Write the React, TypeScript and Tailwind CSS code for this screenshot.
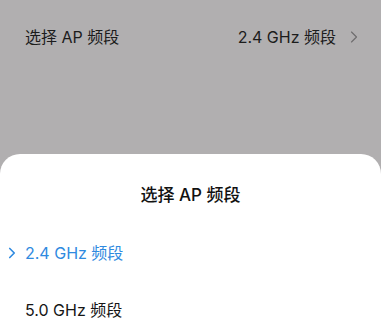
import { ChevronRight } from 'lucide-react';

const FONT = { fontFamily: 'Inter, "Noto Sans CJK SC", sans-serif' };

const bands = [
  { id: '2.4', label: '2.4 GHz 频段' },
  { id: '5.0', label: '5.0 GHz 频段' },
];

export default function App() {
  const selected = '2.4';

  return (
    <div className="flex h-[331px] w-[381px] flex-col overflow-hidden bg-[#b1afb0]" style={FONT}>
      {/* setting row behind the dimmed overlay */}
      <div className="flex h-[74px] shrink-0 items-center justify-between pl-[25px] pr-[17px] text-[16px] text-[#1c1c1c]">
        <span>选择 AP 频段</span>
        <div className="flex items-center gap-[8px]">
          <span>2.4 GHz 频段</span>
          <ChevronRight className="h-[20px] w-[20px] text-[#6e6d6e]" strokeWidth={1.4} />
        </div>
      </div>

      <div className="h-[80px] shrink-0" />

      {/* bottom sheet */}
      <div className="flex flex-1 flex-col rounded-t-[20px] bg-white">
        <div className="flex h-[70px] shrink-0 items-center justify-center pt-[14px] text-[17px] font-medium text-[#111]">
          选择 AP 频段
        </div>
        {bands.map((b) => {
          const active = b.id === selected;
          return (
            <div
              key={b.id}
              className={`relative flex h-[57px] shrink-0 items-center pl-[25px] text-[16px] ${
                active ? 'text-[#2f8ae0]' : 'text-[#161616]'
              }`}
            >
              {active && (
                <ChevronRight
                  className="absolute left-[3px] top-1/2 h-[18px] w-[18px] -translate-y-1/2"
                  strokeWidth={2.2}
                />
              )}
              {b.label}
            </div>
          );
        })}
      </div>
    </div>
  );
}
